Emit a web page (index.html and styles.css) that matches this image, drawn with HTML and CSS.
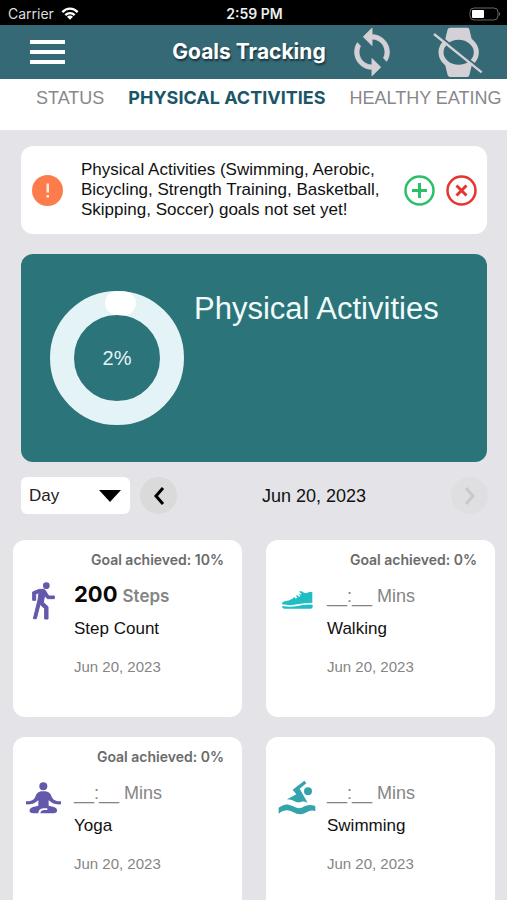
FILE: index.html
```html
<!DOCTYPE html>
<html lang="en">
<head>
<meta charset="utf-8">
<meta name="viewport" content="width=device-width, initial-scale=1">
<title>Goals Tracking</title>
<link rel="stylesheet" href="styles.css">
</head>
<body>
<div class="status-bar">
  <span class="carrier">Carrier
    <svg width="18" height="13" viewBox="0 0 54 38" aria-hidden="true"><g fill="none" stroke="#fff" stroke-width="7"><path d="M4 15C17 1 37 1 50 15"/><path d="M13 24c8-8 20-8 28 0"/></g><path fill="#fff" d="M18 29c5-5 13-5 18 0l-9 9z"/></svg>
  </span>
  <span class="clock">2:59 PM</span>
  <span class="battery"><svg width="32" height="14" viewBox="0 0 32 14" aria-hidden="true"><rect x="1" y="1" width="28" height="12" rx="4" fill="none" stroke="#666"/><rect x="3" y="3" width="12" height="8" rx="1" fill="#fff"/><path d="M30 5q2 2 0 4z" fill="#777"/></svg></span>
</div>
<header class="app-bar">
  <button class="icon-button menu" aria-label="Menu"><svg width="35" height="24" viewBox="0 0 35 24"><path fill="#fff" d="M0 0h35v4H0zM0 10h35v4H0zM0 20h35v4H0z"/></svg></button>
  <h1>Goals Tracking</h1>
  <div class="actions">
    <button class="icon-button" aria-label="Sync"><svg width="52" height="52" viewBox="0 0 24 24"><path fill="#d3d1d5" stroke="#d3d1d5" stroke-width=".4" d="M12 4V1L8 5l4 4V6c3.310 0 6 2.690 6 6 0 1.010-.250 1.970-.700 2.800l1.460 1.460C19.540 15.030 20 13.570 20 12c0-4.420-3.580-8-8-8zm0 14c-3.310 0-6-2.690-6-6 0-1.010.250-1.970.700-2.800L5.240 7.740C4.460 8.970 4 10.430 4 12c0 4.420 3.580 8 8 8v3l4-4-4-4v3z"/></svg></button>
    <button class="icon-button" aria-label="Watch disconnected"><svg width="50" height="50" viewBox="540 80 150 150"><path fill="#d3d1d5" d="M592 82h51q5 0 6 5l9 37h-83l9-37q1-5 8-5zM575 188h83l-9 37q-1 5-6 5h-51q-6 0-8-5z"/><ellipse cx="617" cy="156" rx="53" ry="45" fill="#366976" stroke="#d3d1d5" stroke-width="15"/><path d="m547 96 144 117" stroke="#366976" stroke-width="6"/><path d="m543 101 143 115" stroke="#d3d1d5" stroke-width="7"/></svg></button>
  </div>
</header>
<nav class="tabs">
  <a href="#status">STATUS</a>
  <a href="#physical" class="active" aria-current="page">PHYSICAL ACTIVITIES</a>
  <a href="#eating">HEALTHY EATING</a>
</nav>
<main>
  <section class="alert">
    <svg class="warn" width="31" height="31" viewBox="0 0 62 62" aria-hidden="true"><circle cx="31" cy="31" r="31" fill="#fc7d4b"/><path fill="#ffe9df" d="M29 17h5v18h-5zM29 40h5v5h-5z"/></svg>
    <p>Physical Activities (Swimming, Aerobic, Bicycling, Strength Training, Basketball, Skipping, Soccer) goals not set yet!</p>
    <div class="alert-actions">
      <button class="icon-button" aria-label="Add goals"><svg width="31" height="31" viewBox="0 0 62 62" fill="none" stroke="#2bbf67"><circle cx="31" cy="31" r="28" stroke-width="5"/><path stroke-width="6" d="M31 16v30M16 31h30"/></svg></button>
      <button class="icon-button" aria-label="Dismiss"><svg width="31" height="31" viewBox="0 0 62 62" fill="none" stroke="#e5352c"><circle cx="31" cy="31" r="28" stroke-width="5"/><path stroke-width="6" d="m21 21 20 20m0-20L21 41"/></svg></button>
    </div>
  </section>
  <section class="hero">
    <svg class="ring" width="136" height="136" viewBox="0 0 136 136" role="img" aria-label="2 percent complete">
      <g fill="none" stroke-width="24"><circle cx="68" cy="68" r="55" stroke="#e4f3f6"/><circle cx="68" cy="68" r="55" stroke="#fff" stroke-linecap="round" pathLength="100" stroke-dasharray="2 98" transform="rotate(-90 68 68)"/></g>
      <text x="68" y="75" text-anchor="middle">2%</text>
    </svg>
    <h2>Physical Activities</h2>
  </section>
  <div class="period">
    <label class="select"><select aria-label="Period"><option>Day</option><option>Week</option><option>Month</option></select>
      <svg width="22" height="12" viewBox="0 0 22 12" aria-hidden="true"><path d="M0 0h22L11 12z"/></svg></label>
    <button class="round" aria-label="Previous day"><svg width="12" height="18" viewBox="0 0 12 18"><path d="M10 1 3 9l7 8" fill="none" stroke="#000" stroke-width="3"/></svg></button>
    <span class="date">Jun 20, 2023</span>
    <button class="round next" aria-label="Next day" disabled><svg width="12" height="18" viewBox="0 0 12 18"><path d="m2 1 7 8-7 8" fill="none" stroke="#c9c9cb" stroke-width="3"/></svg></button>
  </div>
  <section class="cards">
    <article class="card">
      <p class="goal">Goal achieved: 10%</p>
      <div class="icon"><svg width="24" height="38" viewBox="96 50 72 114" aria-hidden="true"><g fill="#6259ad"><circle cx="139" cy="61" r="10"/><path stroke="#6259ad" stroke-width="3" d="m98 80 20-8h13q4 1 6 5l9 15h17v8h-21l-8-10-4 21 14 13v37h-10v-31l-14-13-11 43h-9l14-56 3-22-10 4v19h-9z"/></g></svg></div>
      <div class="details"><p class="value"><strong>200</strong> <b>Steps</b></p><h3>Step Count</h3><time datetime="2023-06-20">Jun 20, 2023</time></div>
    </article>
    <article class="card">
      <p class="goal">Goal achieved: 0%</p>
      <div class="icon"><svg width="32" height="38" viewBox="83 50 96 114" aria-hidden="true"><path fill="#20bdc5" d="M86 117q-2-8 12-10 17-3 25-12l5 5 4-4-4-4 3-3 6 6 4-4-6-6q6 1 8 3l1-4-7-4 2-2h6q8 9 22 3 5-3 10 0v31q-26 0-45 5-19 5-46 0zM86 122q25 5 47 0 20-6 45-4v8q-2 4-6 4H92q-6-1-6-8z"/></svg></div>
      <div class="details"><p class="value">__:__ Mins</p><h3>Walking</h3><time datetime="2023-06-20">Jun 20, 2023</time></div>
    </article>
    <article class="card">
      <p class="goal">Goal achieved: 0%</p>
      <div class="icon"><svg width="35" height="38" viewBox="79 145 105 114" aria-hidden="true"><g fill="#6259ad"><circle cx="131" cy="167" r="12"/><path d="M131 182c16 0 20 4 25 16 5 10 12 14 28 14v9c-19 1-29-4-37-13v17l16 4c13 4 12 19-1 19h-40c2-10 6-10 21-10v-5c-19-2-27 4-27 15h-15c-15 0-15-15-1-19l16-4v-17c-8 9-18 14-37 13v-9c16 0 23-4 28-14 5-12 9-16 24-16z"/></g></svg></div>
      <div class="details"><p class="value">__:__ Mins</p><h3>Yoga</h3><time datetime="2023-06-20">Jun 20, 2023</time></div>
    </article>
    <article class="card">
      <p class="goal"></p>
      <div class="icon"><svg width="38" height="38" viewBox="75 147 114 114" aria-hidden="true"><g fill="#33a4ab"><circle cx="165" cy="184" r="12"/><path d="m154 152 6 8-20 16 24 42c-7-2-12-5-20-2-8 3-14 1-21-3-6-3-12-4-21-5l28-15-11-14zM77 233c10-6 20-12 32-8 14 3 22 13 37 8 15-8 24-10 41-5v16c-12-6-22 1-32 6-14 6-24 2-34-3-16-9-27-8-44 4z"/></g></svg></div>
      <div class="details"><p class="value">__:__ Mins</p><h3>Swimming</h3><time datetime="2023-06-20">Jun 20, 2023</time></div>
    </article>
  </section>
</main>
</body>
</html>
```
FILE: styles.css
```css
* { box-sizing: border-box; }
body { margin: 0; background: #e4e3e8; color: #111; font: 17px/20px "Liberation Sans", Arial, sans-serif; }
h1, h2, h3, p { margin: 0; font-weight: 400; }
svg { display: block; }
button { padding: 0; border: 0; background: none; cursor: pointer; }
.status-bar { display: grid; grid-template-columns: 1fr auto 1fr; align-items: center; height: 25px; padding: 2px 6px 0 8px; background: #000; color: #ddd; font: 14px/20px Inter, sans-serif; }
.carrier { display: flex; align-items: center; gap: 7px; }
.clock { color: #eee; font-weight: 600; }
.battery { justify-self: end; }
.app-bar { display: grid; grid-template-columns: 1fr auto 1fr; align-items: center; height: 54px; padding: 0 24px 0 15px; background: #366976; color: #fff; }
.app-bar h1 { font: 700 21px/24px Inter, sans-serif; text-shadow: 1px 2px 2px #17333c; }
.menu { justify-self: start; margin-left: 15px; }
.actions { display: flex; justify-content: space-between; align-items: center; padding-left: 20px; }
.tabs { display: flex; gap: 24px; height: 51px; padding: 9px 0 0 36px; background: #fff; overflow: hidden; white-space: nowrap; }
.tabs a { color: #88888a; font-size: 18px; text-decoration: none; }
.tabs .active { color: #1b5668; font: 700 18px/20px Inter, sans-serif; }
.alert { display: flex; align-items: center; margin: 16px 20px 20px 21px; padding: 14px 10px 14px 11px; border-radius: 12px; background: #fff; }
.alert p { flex: 1; padding-left: 18px; }
.alert-actions { display: flex; gap: 11px; }
.hero { display: flex; align-items: flex-start; gap: 9px; min-height: 208px; margin: 0 20px 0 21px; padding: 36px 28px; border-radius: 12px; background: #2a747a; color: #f2fafa; }
.hero h2 { font-size: 31px; line-height: 38px; }
.ring text { fill: #e4f3f6; font-size: 20px; }
.period { display: flex; align-items: center; margin: 15px 19px 26px 21px; }
.select { position: relative; width: 109px; }
.select select { width: 100%; height: 37px; padding: 0 8px; border: 0; border-radius: 6px; background: #fff; color: #222; font: inherit; appearance: none; }
.select svg { position: absolute; right: 9px; top: 13px; pointer-events: none; }
.round { display: grid; place-items: center; width: 37px; height: 37px; margin-left: 10px; border-radius: 50%; background: #dadada; }
.next { margin-left: 0; background: #dfdfe1; }
.date { flex: 1; text-align: center; font-size: 18px; }
.cards { display: grid; grid-template-columns: 1fr 1fr; gap: 20px 24px; padding: 0 12px 20px 13px; }
.card { display: grid; grid-template-columns: 61px 1fr; grid-template-rows: 20px 1fr; min-height: 177px; padding: 10px 0 20px; border-radius: 12px; background: #fff; }
.goal { grid-column: 1 / -1; padding-right: 18px; color: #6b6b6b; font: 600 14px/20px Inter, sans-serif; text-align: right; }
.icon { display: grid; place-items: center; height: 38px; margin-top: 12px; }
.details { padding-top: 13px; }
.value { color: #858585; font-size: 18px; line-height: 26px; }
.value strong { color: #080808; font: 700 22px/22px Inter, sans-serif; }
.value b { font: 600 17px/20px Inter, sans-serif; }
.card h3 { margin-top: 10px; font-size: 17px; line-height: 20px; }
.card time { display: block; margin-top: 18px; color: #858585; font-size: 15px; line-height: 20px; }
```
